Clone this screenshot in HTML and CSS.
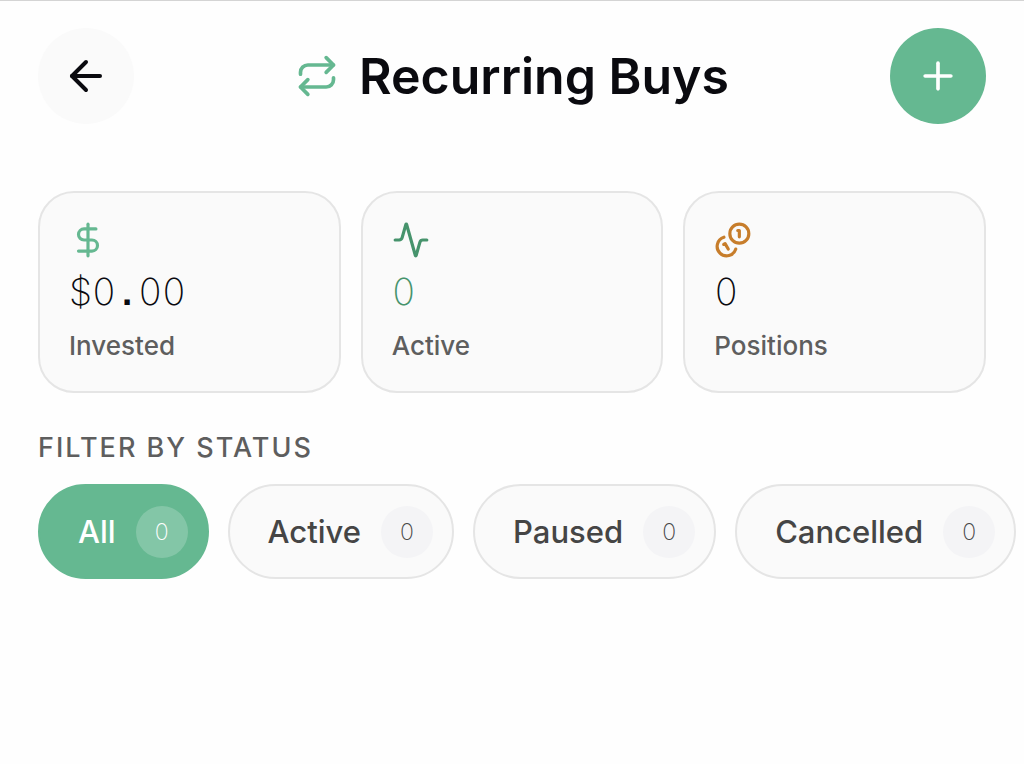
FILE: index.html
```html
<!DOCTYPE html>
<html lang="en">

<head>
    <meta charset="UTF-8">
    <meta name="viewport" content="width=device-width, initial-scale=1.0">
    <title>Recurring Buys</title>
    <link rel="stylesheet" href="styles.css">
</head>

<body>

    <header class="header">
        <button class="btn-round" type="button" aria-label="Back">
            <svg class="icon icon-back" viewBox="0 0 24 24">
                <path d="m12 19-7-7 7-7" />
                <path d="M19 12H5" />
            </svg>
        </button>
        <div class="title">
            <svg class="icon icon-title" viewBox="0 0 24 24">
                <path d="m17 2 4 4-4 4" />
                <path d="M3 11v-1a4 4 0 0 1 4-4h14" />
                <path d="m7 22-4-4 4-4" />
                <path d="M21 13v1a4 4 0 0 1-4 4H3" />
            </svg>
            <h1>Recurring Buys</h1>
        </div>
        <button class="btn-round btn-add" type="button" aria-label="Add">
            <svg class="icon icon-title" viewBox="0 0 24 24">
                <path d="M5 12h14" />
                <path d="M12 5v14" />
            </svg>
        </button>
    </header>

    <main>
        <section class="stats">
            <div class="card">
                <svg class="icon icon-card green" viewBox="0 0 24 24">
                    <path d="M12 2v20" />
                    <path d="M17 5H9.500a3.500 3.500 0 0 0 0 7h5a3.500 3.500 0 0 1 0 7H6" />
                </svg>
                <p class="value">$0<span class="point">.</span>00</p>
                <p class="label">Invested</p>
            </div>
            <div class="card">
                <svg class="icon icon-card dark-green" viewBox="0 0 24 24">
                    <path d="M22 12h-2.480a2 2 0 0 0-1.930 1.460l-2.350 8.360a.25.25 0 0 1-.48 0L9.240 2.180a.25.25 0 0 0-.48 0l-2.350 8.360A2 2 0 0 1 4.490 12H2" />
                </svg>
                <p class="value dark-green">0</p>
                <p class="label">Active</p>
            </div>
            <div class="card">
                <svg class="icon icon-card orange" viewBox="0 0 24 24">
                    <circle cx="16" cy="8" r="6" />
                    <path d="M13.744 17.736a6 6 0 1 1-7.480-7.480" />
                    <path d="M15 6h1v4" />
                    <path d="m6.134 14.768.866-.5 2 3.464" />
                </svg>
                <p class="value">0</p>
                <p class="label">Positions</p>
            </div>
        </section>

        <section>
            <h2>Filter by status</h2>
            <div class="filters">
                <button class="filter selected" type="button">All <span class="count">0</span></button>
                <button class="filter" type="button">Active <span class="count">0</span></button>
                <button class="filter" type="button">Paused <span class="count">0</span></button>
                <button class="filter" type="button">Cancelled <span class="count">0</span></button>
            </div>
        </section>
    </main>

</body>

</html>
```

FILE: styles.css
```css
* {
    box-sizing: border-box;
}

body {
    margin: 0;
    border-top: 1px solid #d4d4d4;
    background-color: #fefefe;
    color: #0a0a0f;
    font-family: Inter, "Liberation Sans", sans-serif;
}

button {
    font-family: inherit;
    cursor: pointer;
}

h1,
h2,
p {
    margin: 0;
}

.header {
    display: flex;
    align-items: center;
    justify-content: space-between;
    padding: 27px 38px 0;
}

.btn-round {
    display: flex;
    align-items: center;
    justify-content: center;
    width: 96px;
    height: 96px;
    padding: 0;
    border: none;
    border-radius: 50%;
    background-color: #fafafa;
    color: #0a0a0f;
}

.btn-add {
    background-color: #65b891;
    color: #fff;
}

.icon {
    display: block;
    fill: none;
    stroke: currentColor;
    stroke-width: 2;
    stroke-linecap: round;
    stroke-linejoin: round;
}

.icon-back {
    width: 48px;
    height: 48px;
}

.icon-title {
    width: 44px;
    height: 44px;
}

.icon-card {
    width: 38px;
    height: 38px;
}

.title {
    display: flex;
    align-items: center;
    gap: 20px;
    color: #65b891;
}

h1 {
    color: #0a0a0f;
    font-size: 50px;
    font-weight: 600;
    line-height: 60px;
}

.stats {
    display: grid;
    grid-template-columns: repeat(3, 1fr);
    gap: 20px;
    padding: 67px 38px 39px;
}

.card {
    padding: 28px 29px;
    border: 2px solid #e5e5e5;
    border-radius: 36px;
    background-color: #fafafa;
}

.green {
    color: #65b891;
}

.dark-green {
    color: #46936c;
}

.orange {
    color: #c77d2b;
}

.value {
    margin-top: 8px;
    font-size: 37px;
    font-weight: 200;
    font-variant-numeric: tabular-nums;
    line-height: 50px;
}

/* the point takes a full digit width */
.point {
    font-family: "Liberation Mono", monospace;
    font-weight: 700;
    line-height: 1;
}

.label {
    margin-top: 12px;
    color: #5e5e5e;
    font-size: 26px;
    font-weight: 500;
    line-height: 34px;
}

h2 {
    padding: 0 38px;
    color: #5e5e5e;
    font-size: 27px;
    font-weight: 500;
    letter-spacing: 2px;
    line-height: 32px;
    text-transform: uppercase;
}

.filters {
    display: flex;
    gap: 19px;
    padding: 20px 38px;
    overflow-x: auto;
    scrollbar-width: none;
}

.filter {
    display: flex;
    flex-shrink: 0;
    align-items: center;
    gap: 20px;
    height: 95px;
    padding: 0 19px 0 38px;
    border: 2px solid #e5e5e5;
    border-radius: 48px;
    background-color: #fafafa;
    color: #454545;
    font-size: 31px;
    font-weight: 500;
}

.count {
    display: flex;
    align-items: center;
    justify-content: center;
    width: 52px;
    height: 52px;
    border-radius: 50%;
    background-color: #f4f4f6;
    font-size: 23px;
    font-weight: 200;
}

.selected {
    border-color: #65b891;
    background-color: #65b891;
    color: #fff;
}

.selected .count {
    background-color: rgba(255, 255, 255, 0.2);
}
```
